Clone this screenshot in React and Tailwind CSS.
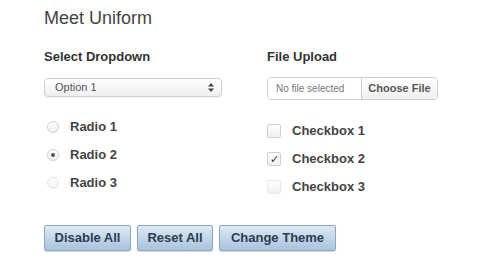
import { useState } from "react";

const radios = ["Radio 1", "Radio 2", "Radio 3"];
const checks = ["Checkbox 1", "Checkbox 2", "Checkbox 3"];

const Radio = ({ label, checked, faded }) => (
  <label className="flex items-center h-[28px]">
    <span
      className={`w-[12px] h-[12px] ml-[3px] rounded-full border flex items-center justify-center bg-gradient-to-b from-white to-[#f1f1f1] ${faded ? "border-[#e6e6e6]" : "border-[#cfcfcf]"}`}
    >
      {checked && <span className="w-[4px] h-[4px] rounded-full bg-[#555]" />}
    </span>
    <span className="ml-[11px] text-[13px] font-bold text-[#444]">{label}</span>
  </label>
);

const Check = ({ label, checked, faded }) => (
  <label className="flex items-center h-[28px]">
    <span
      className={`w-[14px] h-[14px] rounded-[2px] border flex items-center justify-center bg-gradient-to-b from-white to-[#f0f0f0] ${faded ? "border-[#e8e8e8]" : "border-[#d0d0d0]"}`}
    >
      {checked && <span className="text-[11px] leading-none text-[#333]">✓</span>}
    </span>
    <span className="ml-[11px] text-[13px] font-bold text-[#444]">{label}</span>
  </label>
);

const Btn = ({ children, w }) => (
  <button className={`h-[26px] ${w} rounded-[2px] border border-[#8aa9c3] bg-gradient-to-b from-[#dde9f4] to-[#a8c3db] text-[13px] font-bold text-[#2c3d52] shadow-[0_1px_1px_rgba(0,0,0,0.15)]`}>
    {children}
  </button>
);

export default function App() {
  const [radio] = useState(1);
  return (
    <div className="w-[480px] h-[266px] bg-white px-[44px] pt-[6px] font-['Liberation_Sans',Arial,sans-serif]">
      <h1 className="text-[18px] leading-6 text-[#444]">Meet Uniform</h1>
      <div className="flex mt-[19px]">
        <div className="w-[223px] shrink-0">
          <h2 className="text-[13px] leading-4 font-bold text-[#333]">Select Dropdown</h2>
          <div className="mt-[13px] w-[178px] h-[19px] rounded-[4px] border border-[#cfcfcf] bg-gradient-to-b from-white to-[#efefef] shadow-[0_1px_1px_rgba(0,0,0,0.06)] flex items-center justify-between pl-[10px] pr-[7px]">
            <span className="text-[11px] text-[#555]">Option 1</span>
            <svg width="6" height="9" viewBox="0 0 6 9">
              <path d="M3 0L6 3.5H0Z M3 9L0 5.5H6Z" fill="#444" />
            </svg>
          </div>
          <div className="mt-[16px]">
            {radios.map((r, i) => (
              <Radio key={r} label={r} checked={i === radio} faded={i === 2} />
            ))}
          </div>
        </div>
        <div className="flex-1">
          <h2 className="text-[13px] leading-4 font-bold text-[#333]">File Upload</h2>
          <div className="mt-[12px] w-[171px] h-[23px] rounded-[4px] border border-[#cfcfcf] flex overflow-hidden">
            <div className="w-[94px] flex items-center pl-[8px] text-[10px] text-[#777] bg-white border-r border-[#cfcfcf]">
              No file selected
            </div>
            <div className="flex-1 flex items-center justify-center text-[11px] font-bold text-[#555] bg-gradient-to-b from-white to-[#f0f0f0]">
              Choose File
            </div>
          </div>
          <div className="mt-[17px]">
            {checks.map((c, i) => (
              <Check key={c} label={c} checked={i === 1} faded={i === 2} />
            ))}
          </div>
        </div>
      </div>
      <div className="flex gap-[6px] mt-[24px]">
        <Btn w="w-[87px]">Disable All</Btn>
        <Btn w="w-[76px]">Reset All</Btn>
        <Btn w="w-[117px]">Change Theme</Btn>
      </div>
    </div>
  );
}
